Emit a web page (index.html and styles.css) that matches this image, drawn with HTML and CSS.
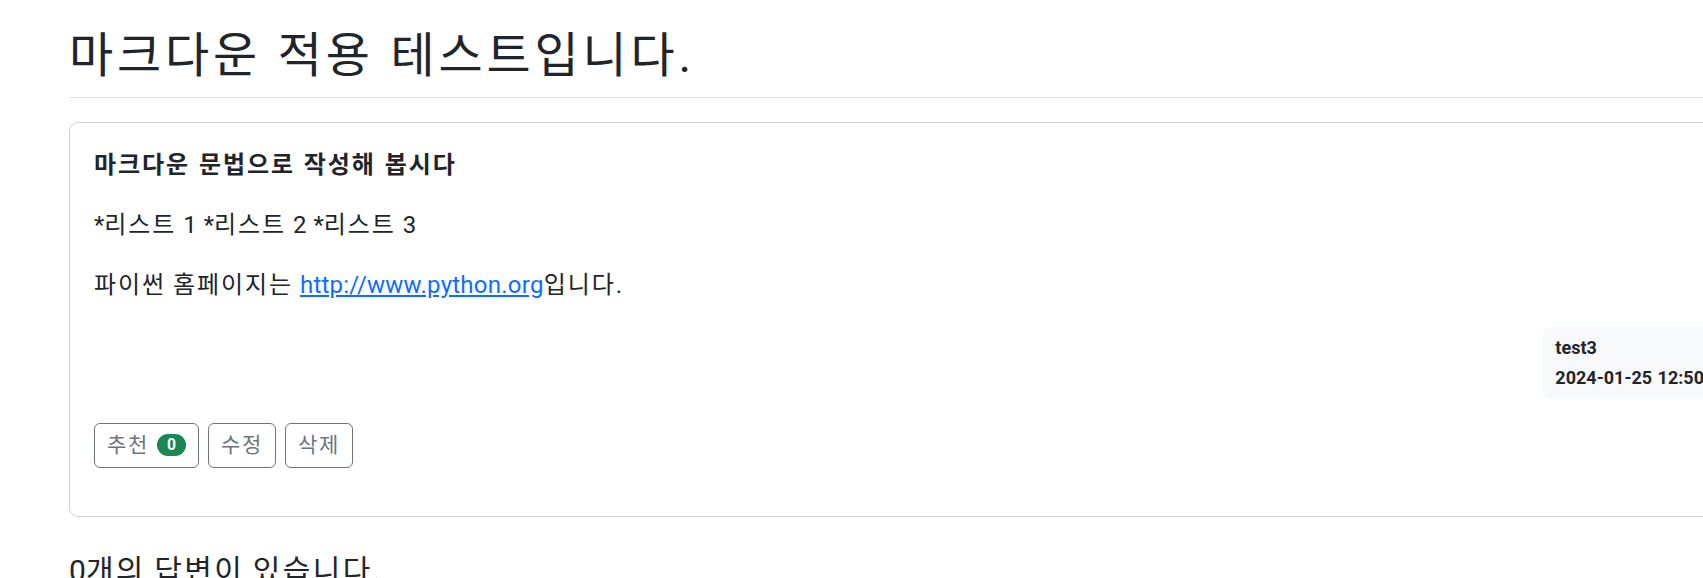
FILE: index.html
```html
<!DOCTYPE html>
<html lang="ko">
<head>
<meta charset="utf-8">
<title>pybo</title>
<link rel="stylesheet" href="styles.css">
</head>
<body>
<div class="container">
  <h2 class="subject">마크다운 적용 테스트입니다.</h2>
  <div class="card">
    <div class="card-body">
      <div class="card-text">
        <p><strong class="k">마크다운 문법으로 작성해 봅시다</strong></p>
        <p>*<span class="k">리스트</span> 1 *<span class="k">리스트</span> 2 *<span class="k">리스트</span> 3</p>
        <p><span class="k">파이썬</span> <span class="k">홈페이지는</span> <a href="#">http://www.python.org</a><span class="k">입니다</span>.</p>
      </div>
      <div class="meta-row">
        <div class="author-badge">
          <div class="author">test3</div>
          <div>2024-01-25 12:50</div>
        </div>
      </div>
      <div class="actions">
        <a href="#" class="btn"><span class="k">추천</span><span class="pill">0</span></a><a href="#" class="btn"><span class="k">수정</span></a><a href="#" class="btn"><span class="k">삭제</span></a>
      </div>
    </div>
  </div>
  <h5 class="answer-count">0<span class="k">개의</span> <span class="k">답변이</span> <span class="k">있습니다</span>.</h5>
</div>
</body>
</html>
```
FILE: styles.css
```css
html, body {
  margin: 0;
  padding: 0;
  background: #fff;
}
body {
  overflow: hidden;
  font-family: Roboto, "Noto Sans CJK KR", sans-serif;
  font-size: 24px;
  line-height: 1.5;
  word-spacing: 1px;
  color: #212529;
}
.k {
  letter-spacing: 0.08em;
}
.container {
  width: 1672px;
  margin-left: 69px;
  padding-top: 15px;
}
.subject {
  margin: 0 0 12px;
  padding: 12px 0;
  font-size: 48px;
  font-weight: 400;
  line-height: 1.2;
  letter-spacing: 0.08em;
  border-bottom: 1px solid #dee2e6;
}
.card {
  margin-top: 24px;
  border: 1px solid #d3d3d4;
  border-radius: 9px;
}
.card-body {
  padding: 24px;
}
.card-text p {
  margin: 0 0 24px;
}
.card-text strong {
  font-weight: 700;
}
.card-text a {
  color: #0d6efd;
  text-decoration: underline;
  letter-spacing: 0.25px;
}
.meta-row {
  display: flex;
  justify-content: flex-end;
}
.author-badge {
  background: #f8f9fa;
  color: #212529;
  padding: 12px;
  font-size: 18px;
  font-weight: 700;
  line-height: 1;
  border-radius: 9px;
}
.author {
  margin-bottom: 12px;
}
.actions {
  display: flex;
  gap: 9px;
  margin: 24px 0;
}
.btn {
  display: inline-flex;
  align-items: center;
  gap: 8px;
  padding: 6px 12px;
  font-size: 21px;
  line-height: 31px;
  color: #6c757d;
  text-decoration: none;
  border: 1px solid #6c757d;
  border-radius: 6px;
}
.pill {
  display: inline-block;
  padding: 3px 10px;
  font-size: 15.75px;
  font-weight: 700;
  line-height: 1;
  color: #fff;
  background: #198754;
  border-radius: 50rem;
}
.answer-count {
  margin: 24px 0;
  padding: 12px 0;
  font-size: 30px;
  font-weight: 400;
  line-height: 1.2;
  border-bottom: 1px solid #dee2e6;
}
```
